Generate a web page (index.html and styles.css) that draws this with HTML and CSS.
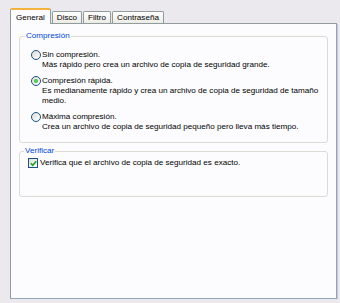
FILE: index.html
```html
<!DOCTYPE html>
<html lang="es">
<head>
    <meta charset="UTF-8">
    <title>Opciones de copia de seguridad</title>
    <link rel="stylesheet" href="styles.css">
</head>
<body>
<div class="dialog">
    <div class="tabs">
        <div class="tab active">General</div>
        <div class="tab">Disco</div>
        <div class="tab">Filtro</div>
        <div class="tab">Contraseña</div>
    </div>
    <div class="panel">
        <fieldset class="group">
            <legend>Compresión</legend>
            <label class="option">
                <span class="radio"></span>
                <span class="text">Sin compresión.<br>Más rápido pero crea un archivo de copia de seguridad grande.</span>
            </label>
            <label class="option">
                <span class="radio checked"></span>
                <span class="text">Compresión rápida.<br>Es medianamente rápido y crea un archivo de copia de seguridad de tamaño<br>medio.</span>
            </label>
            <label class="option">
                <span class="radio"></span>
                <span class="text">Máxima compresión.<br>Crea un archivo de copia de seguridad pequeño pero lleva más tiempo.</span>
            </label>
        </fieldset>
        <fieldset class="group verify">
            <legend>Verificar</legend>
            <label class="option check-row">
                <span class="checkbox">
                    <svg width="7" height="7" viewBox="0 0 7 7"><path d="M0.8 3.2 L2.7 5.2 L6.2 1.2" fill="none" stroke="#21a121" stroke-width="1.6"/></svg>
                </span>
                <span class="text">Verifica que el archivo de copia de seguridad es exacto.</span>
            </label>
        </fieldset>
    </div>
</div>
</body>
</html>
```

FILE: styles.css
```css
body {
    margin: 0;
    background: #ebe9ed;
    font-family: "Liberation Sans", Arial, sans-serif;
    font-size: 8.1px;
    color: #000;
}
.dialog {
    padding: 8px 3px 0 10px;
}
.tabs {
    display: flex;
    align-items: flex-end;
    height: 15px;
    position: relative;
    z-index: 1;
}
.tab {
    height: 11px;
    line-height: 11px;
    padding: 0 4px;
    margin-left: 1px;
    border: 1px solid #919b9c;
    border-bottom: none;
    border-radius: 2px 2px 0 0;
    background: linear-gradient(#fefefe, #ecebe6);
}
.tab.active {
    height: 14px;
    line-height: 15px;
    padding: 0 5px;
    margin-left: 0;
    border-top: 2px solid #f3b43f;
    background: #fcfcfe;
    margin-bottom: -1px;
}
.panel {
    height: 276px;
    box-sizing: border-box;
    border: 1px solid #919b9c;
    border-right-color: #97a3ba;
    border-bottom-color: #97a3ba;
    box-shadow: 1px 1px 0 #c2c7d3;
    background: #fcfcfe;
    padding: 7px 8px 0 8px;
}
.group {
    margin: 0;
    padding: 9px 8px 10px 11px;
    border: 1px solid #dcdad5;
    border-radius: 3px;
}
.group legend {
    color: #0046d5;
    padding: 0 1px;
    margin-left: -6px;
    line-height: 10px;
}
.option {
    display: flex;
    align-items: flex-start;
    line-height: 10px;
    margin-bottom: 6px;
}
.option:last-child {
    margin-bottom: 0;
}
.radio {
    flex: none;
    box-sizing: border-box;
    width: 10px;
    height: 10px;
    border: 1px solid #1c5180;
    border-radius: 50%;
    background: linear-gradient(135deg, #dcdcd7, #ffffff);
    margin-right: 1px;
    display: flex;
    align-items: center;
    justify-content: center;
}
.radio.checked::after {
    content: "";
    width: 4px;
    height: 4px;
    border-radius: 50%;
    background: radial-gradient(#6fe06f, #21a121);
}
.verify {
    margin-top: 3px;
    padding: 2px 8px 28px 8px;
}
.verify legend {
    margin-left: -4px;
}
.checkbox {
    flex: none;
    box-sizing: border-box;
    width: 10px;
    height: 10px;
    border: 1px solid #1c5180;
    background: linear-gradient(135deg, #dcdcd7, #ffffff);
    margin-right: 2px;
    display: flex;
    align-items: center;
    justify-content: center;
}
```
